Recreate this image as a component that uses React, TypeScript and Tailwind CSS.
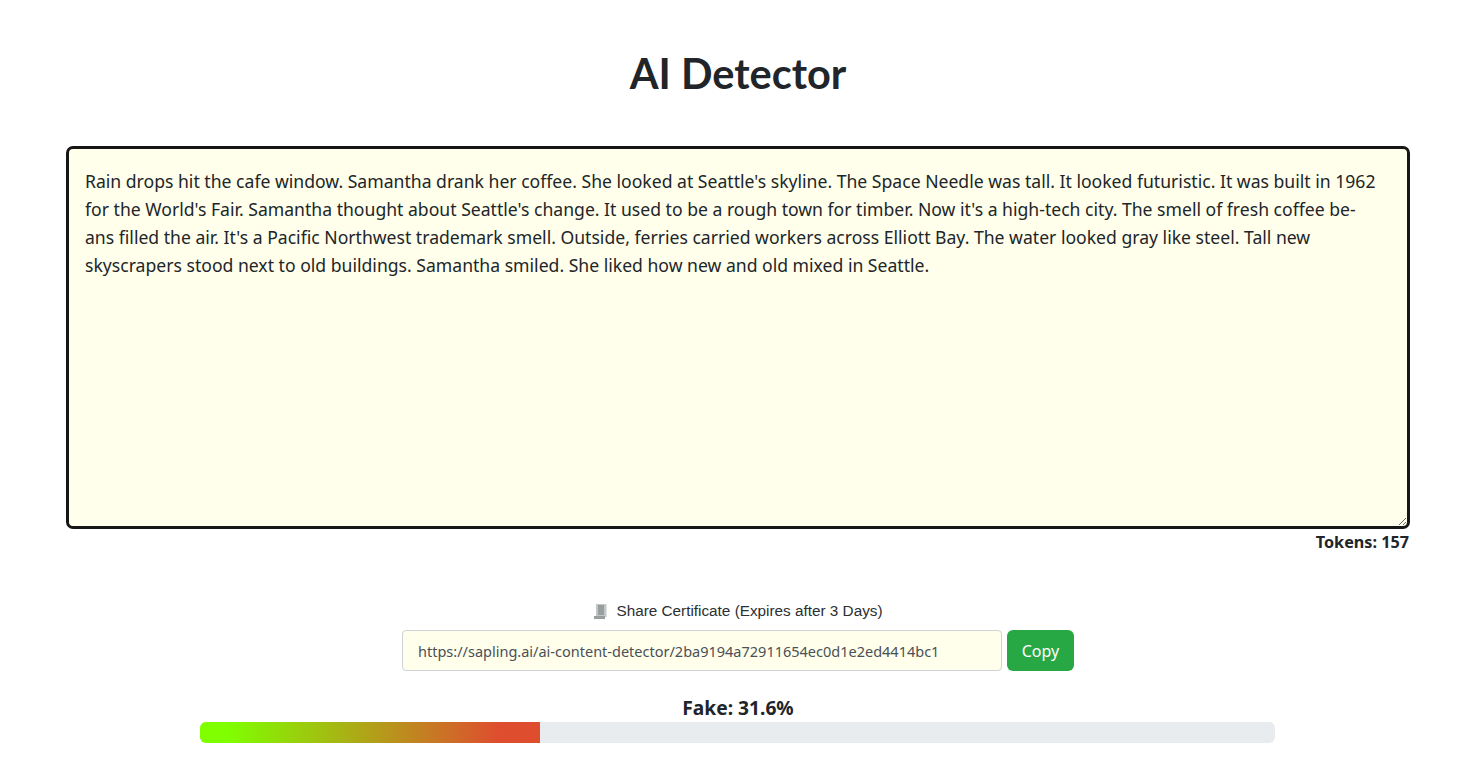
import React from 'react';

const essay = `Rain drops hit the cafe window. Samantha drank her coffee. She looked at Seattle's skyline. The Space Needle was tall. It looked futuristic. It was built in 1962
for the World's Fair. Samantha thought about Seattle's change. It used to be a rough town for timber. Now it's a high-tech city. The smell of fresh coffee be-
ans filled the air. It's a Pacific Northwest trademark smell. Outside, ferries carried workers across Elliott Bay. The water looked gray like steel. Tall new
skyscrapers stood next to old buildings. Samantha smiled. She liked how new and old mixed in Seattle.`;

const CertificateIcon = () => (
  <svg width="15" height="17" viewBox="0 0 15 17" className="shrink-0">
    <path d="M3 1h10v13H3z" fill="#c3c7c7" />
    <path d="M1 13h11v3H1z" fill="#9a9e9e" />
    <path d="M5 3h6M5 5h6M5 7h6M5 9h6M5 11h6" stroke="#6f7474" strokeWidth="1" />
    <path d="M13 1h1v13h-1z" fill="#e4e6e6" />
  </svg>
);

const App: React.FC = () => {
  return (
    <div className="min-h-screen bg-white pl-[6px] text-[#212529] font-['Noto_Sans',sans-serif]">
      <div className="mx-auto w-[1344px] pt-[44px]">
        <h1 className="text-center text-[41.5px] leading-[58px] font-bold text-[#212529] font-['Lato',sans-serif]">AI Detector</h1>

        <textarea
          readOnly
          value={essay}
          className="mt-[44px] block h-[383px] w-full resize-y rounded-[7px] border-[3px] border-[#161616] bg-[#ffffeb] px-4 py-[18px] text-[17.6px] leading-[28px] text-[#212529] outline-none"
        />
        <div className="mt-[1px] pr-px text-right text-[16.2px] leading-6 font-bold">Tokens: 157</div>
      </div>

      <div className="mt-[47px] flex items-center justify-center gap-2 text-[15.3px] leading-5 text-[#2b2f33] font-['Liberation_Sans',sans-serif]">
        <CertificateIcon />
        <span>Share Certificate (Expires after 3 Days)</span>
      </div>

      <div className="mt-[9px] flex justify-center gap-[5px]">
        <input
          readOnly
          value="https://sapling.ai/ai-content-detector/2ba9194a72911654ec0d1e2ed4414bc1"
          className="h-[41px] w-[600px] rounded border border-[#cfd3d6] bg-[#ffffeb] px-[15px] text-[14.5px] text-[#495057] outline-none"
        />
        <button className="h-[41px] w-[67px] rounded-md bg-[#28a745] text-base font-normal text-white">Copy</button>
      </div>

      <div className="mt-[24px] text-center text-[19.2px] leading-[26px] font-bold">Fake: 31.6%</div>
      <div className="mt-px ml-[194px] h-[21px] w-[1075px] overflow-hidden rounded-md bg-[#e9ecef]">
        <div className="h-full w-[31.6%] bg-linear-to-r/srgb from-[#7fff00] from-[8%] to-[#df4d2f] to-[88%]" />
      </div>
    </div>
  );
};

export default App;
